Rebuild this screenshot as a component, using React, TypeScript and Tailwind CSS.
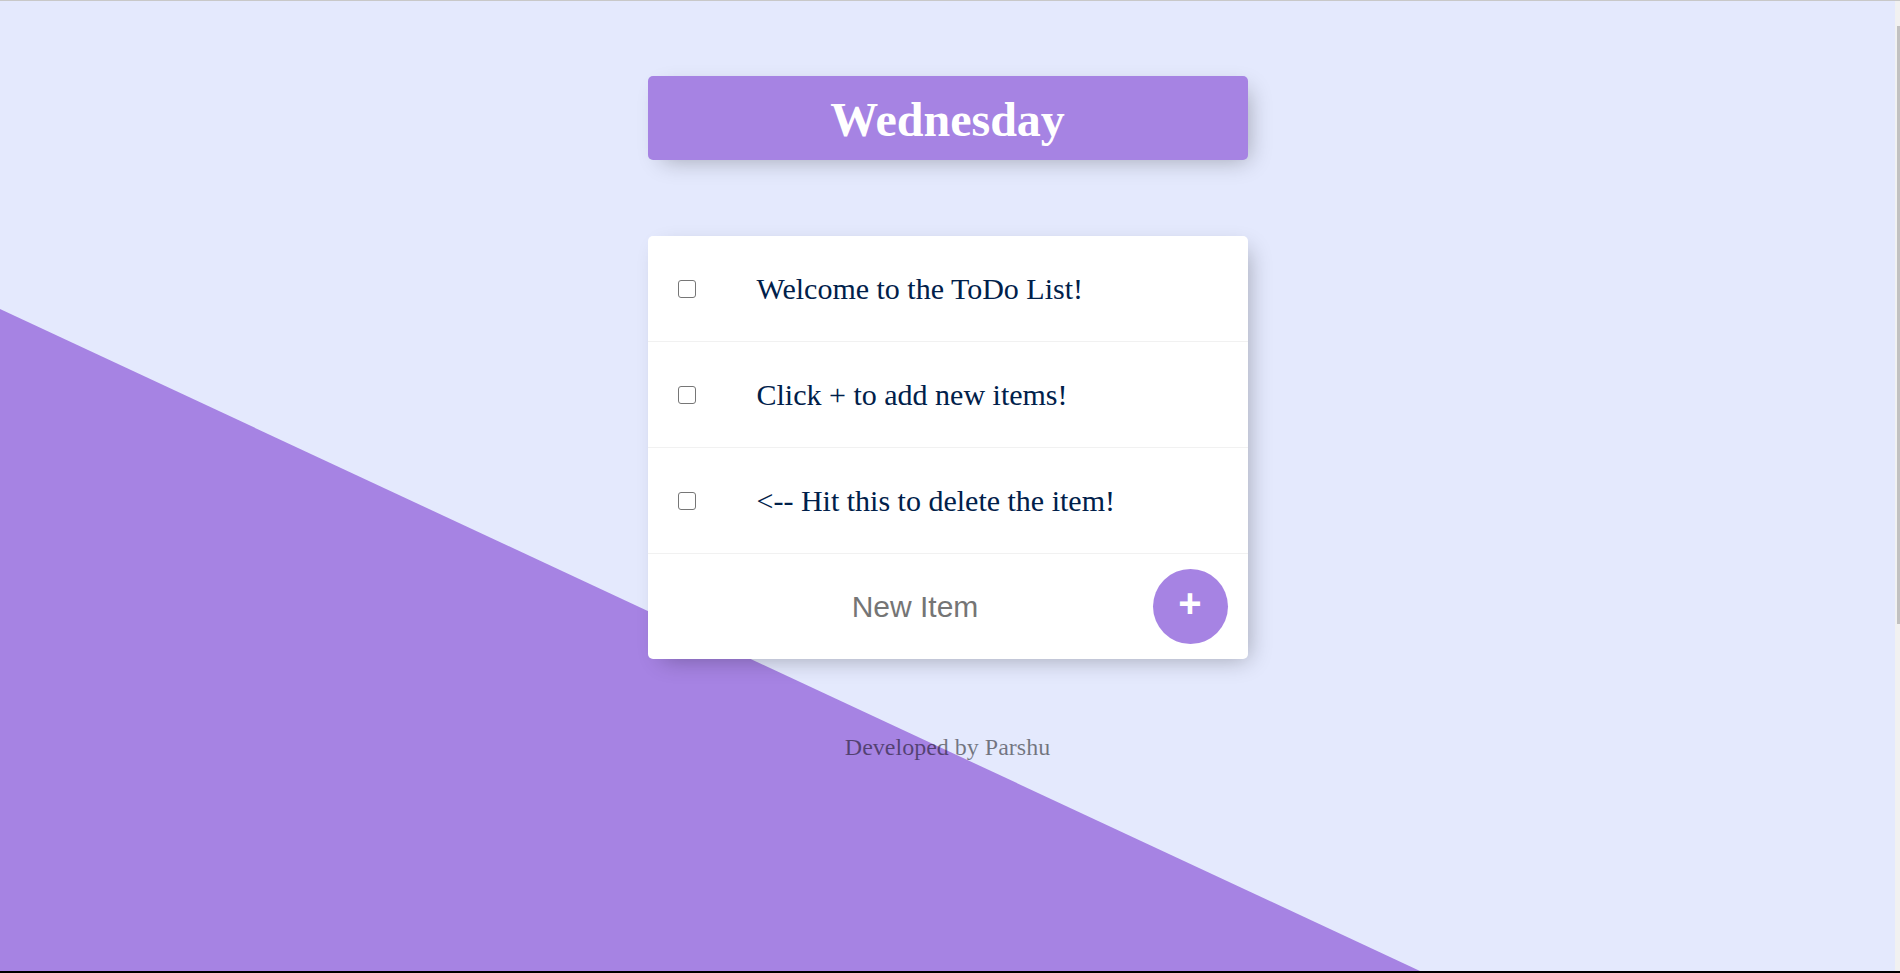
const items = ['Welcome to the ToDo List!', 'Click + to add new items!', '<-- Hit this to delete the item!'];

export default function App() {
  return (
    <div className="flex h-[973px] w-[1900px] flex-col overflow-hidden font-['Liberation_Serif',serif]">
      <div className="h-px bg-[#c8c8c8]" />
      <div className="flex min-h-0 flex-1">
        <main className="relative flex-1 bg-[#E4E9FD]">
          <svg className="absolute inset-0 h-full w-full" viewBox="0 0 1895 970" preserveAspectRatio="none">
            <polygon points="0,308 1420,970 0,970" fill="#A683E3" />
          </svg>
          <div className="relative flex flex-col items-center">
            <div className="mt-[75px] w-[600px] rounded-[5px] bg-[#A683E3] pb-[13px] pt-[17px] text-center shadow-[7px_7px_22px_-7px_rgba(0,0,0,0.3)]">
              <h1 className="text-[48px] font-bold leading-[54px] text-white">Wednesday</h1>
            </div>

            <div className="mt-[76px] w-[600px] rounded-[5px] bg-white shadow-[7px_7px_22px_-7px_rgba(0,0,0,0.3)]">
              {items.map(text => (
                <div key={text} className="flex h-[106px] items-center border-b border-[#f1f1f1]">
                  <input
                    type="checkbox"
                    className="ml-[30px] h-[18px] w-[18px] appearance-none rounded-[3px] border-[1.5px] border-[#767676] bg-white"
                  />
                  <p className="ml-[61px] text-[30px] leading-[34px] text-[#00204a]">{text}</p>
                </div>
              ))}
              <form className="flex h-[105px] items-center" onSubmit={e => e.preventDefault()}>
                <input
                  type="text"
                  placeholder="New Item"
                  className="ml-[30px] h-[90px] w-[475px] bg-transparent text-center font-['Liberation_Sans',sans-serif] text-[30px] outline-none placeholder:text-[#757575]"
                />
                <button
                  type="submit"
                  className="flex h-[75px] w-[75px] items-center justify-center rounded-full bg-[#A683E3] pb-[8px] font-['Liberation_Sans',sans-serif] text-[40px] font-bold leading-none text-white"
                >
                  +
                </button>
              </form>
            </div>

            <footer className="mt-[74px] text-[24px] leading-[28px] text-black/50">Developed by Parshu</footer>
          </div>
        </main>
        <div className="w-[5px] bg-[#f1f1f1]">
          <div className="ml-[2px] mt-[25px] h-[598px] bg-[#c1c1c1]" />
        </div>
      </div>
      <div className="h-[2px] bg-black" />
    </div>
  );
}
